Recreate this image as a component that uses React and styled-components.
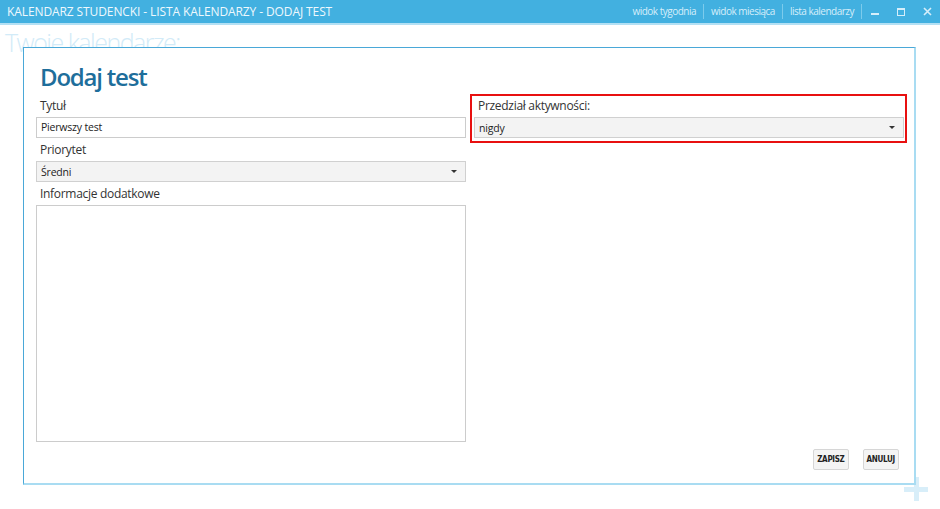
import React from 'react';
import styled, { createGlobalStyle } from 'styled-components';

const GlobalStyle = createGlobalStyle`
  html, body {
    margin: 0;
    padding: 0;
    background: #fff;
  }
  body {
    font-family: "Open Sans", "Noto Sans", sans-serif;
    color: #333;
  }
`;

const Window = styled.div`
  position: relative;
  width: 940px;
  height: 509px;
  overflow: hidden;
  background: #fff;
`;

const TitleBar = styled.div`
  display: flex;
  align-items: center;
  height: 25px;
  padding-left: 7px;
  background: #42b0e0;
  border-bottom: 2px solid #b3e0f4;
  box-sizing: border-box;
`;

const Title = styled.div`
  flex: 1;
  font-size: 12px;
  color: #eef8fd;
  letter-spacing: -0.1px;
  white-space: nowrap;
`;

const NavLink = styled.span`
  font-size: 10px;
  letter-spacing: -0.5px;
  color: #d6eefa;
  padding: 0 7px;
  border-right: 1px solid #7ccbec;
  line-height: 15px;
`;

const WinButton = styled.span`
  display: flex;
  align-items: center;
  justify-content: center;
  width: 26px;
  height: 23px;
`;

const Backdrop = styled.div`
  padding: 2px 5px;
`;

const BackTitle = styled.div`
  font-size: 25px;
  font-weight: 300;
  letter-spacing: -1.5px;
  color: #d2ebf8;
  line-height: 30px;
`;

const AddSign = styled.div`
  position: absolute;
  left: 904px;
  top: 477px;
  width: 24px;
  height: 24px;
  &::before, &::after {
    content: '';
    position: absolute;
    background: #d8eef9;
  }
  &::before { left: 0; top: 10px; width: 24px; height: 5px; }
  &::after { left: 10px; top: 0; width: 5px; height: 24px; }
`;

const Dialog = styled.div`
  position: absolute;
  left: 23px;
  top: 47px;
  width: 893px;
  height: 438px;
  box-sizing: border-box;
  background: #fff;
  border-top: 1px solid #4aa8d8;
  border-left: 1px solid #4aa8d8;
  border-right: 2px solid #a9dcf2;
  border-bottom: 2px solid #a9dcf2;
  padding: 12px 13px 14px 12px;
  display: flex;
  flex-direction: column;
`;

const Heading = styled.h1`
  margin: 0 0 0 4px;
  font-size: 24px;
  font-weight: 600;
  letter-spacing: -1.2px;
  color: #1e6e9b;
  line-height: 34px;
`;

const Columns = styled.div`
  display: grid;
  grid-template-columns: 430px 437px;
  column-gap: 4px;
  align-items: start;
`;

const Column = styled.div`
  display: flex;
  flex-direction: column;
  padding-top: 4px;
`;

const Highlight = styled.div`
  display: flex;
  flex-direction: column;
  border: 2px solid #e81010;
  padding: 2px 1px 3px 2px;
`;

const Label = styled.label`
  font-size: 12px;
  letter-spacing: -0.3px;
  line-height: 16px;
  color: #333;
  padding-left: 4px;
  margin-bottom: 3px;
`;

const TextBox = styled.div`
  height: 21px;
  box-sizing: border-box;
  border: 1px solid #ccc;
  background: #fff;
  font-size: 10.5px;
  letter-spacing: -0.2px;
  line-height: 19px;
  padding-left: 4px;
  color: #222;
  margin-bottom: 4px;
`;

const Combo = styled.div`
  display: flex;
  align-items: center;
  justify-content: space-between;
  height: 21px;
  box-sizing: border-box;
  border: 1px solid #d0d0d0;
  background: #f3f3f3;
  font-size: 10.5px;
  letter-spacing: -0.2px;
  padding: 0 8px 0 4px;
  color: #222;
  margin-bottom: ${p => p.$last ? 0 : 4}px;
`;

const Arrow = styled.span`
  width: 0;
  height: 0;
  border-left: 3px solid transparent;
  border-right: 3px solid transparent;
  border-top: 3px solid #333;
`;

const Memo = styled.div`
  height: 237px;
  box-sizing: border-box;
  border: 1px solid #ccc;
  background: #fff;
`;

const Actions = styled.div`
  display: flex;
  justify-content: flex-end;
  gap: 14px;
  margin-top: 7px;
  padding-right: 2px;
`;

const Button = styled.button`
  height: 21px;
  padding: 0 3px;
  border: 1px solid #d6d6d6;
  border-radius: 2px;
  background: #f4f4f4;
  font-family: "DejaVu Sans Condensed", "DejaVu Sans", sans-serif;
  font-size: 8px;
  font-weight: 700;
  color: #222;
  letter-spacing: -0.3px;
`;

const fields = {
  title: 'Pierwszy test',
  priority: 'Średni',
  range: 'nigdy',
};

export default function App() {
  return (
    <Window>
      <GlobalStyle />
      <TitleBar>
        <Title>KALENDARZ STUDENCKI - LISTA KALENDARZY - DODAJ TEST</Title>
        <NavLink>widok tygodnia</NavLink>
        <NavLink>widok miesiąca</NavLink>
        <NavLink>lista kalendarzy</NavLink>
        <WinButton>
          <svg width="8" height="8" viewBox="0 0 8 8">
            <rect x="0" y="5" width="8" height="2" fill="#d6eefa" />
          </svg>
        </WinButton>
        <WinButton>
          <svg width="8" height="8" viewBox="0 0 8 8">
            <rect x="0.5" y="0.5" width="7" height="7" fill="none" stroke="#d6eefa" />
            <rect x="0" y="0" width="8" height="2" fill="#d6eefa" />
          </svg>
        </WinButton>
        <WinButton>
          <svg width="9" height="9" viewBox="0 0 9 9">
            <path d="M1 1 L8 8 M8 1 L1 8" stroke="#d6eefa" strokeWidth="1.6" />
          </svg>
        </WinButton>
      </TitleBar>
      <Backdrop>
        <BackTitle>Twoje kalendarze:</BackTitle>
      </Backdrop>
      <AddSign />
      <Dialog>
        <Heading>Dodaj test</Heading>
        <Columns>
          <Column>
            <Label>Tytuł</Label>
            <TextBox>{fields.title}</TextBox>
            <Label>Priorytet</Label>
            <Combo>
              {fields.priority}
              <Arrow />
            </Combo>
            <Label>Informacje dodatkowe</Label>
            <Memo />
          </Column>
          <Highlight>
            <Label>Przedział aktywności:</Label>
            <Combo $last>
              {fields.range}
              <Arrow />
            </Combo>
          </Highlight>
        </Columns>
        <Actions>
          <Button>ZAPISZ</Button>
          <Button>ANULUJ</Button>
        </Actions>
      </Dialog>
    </Window>
  );
}
